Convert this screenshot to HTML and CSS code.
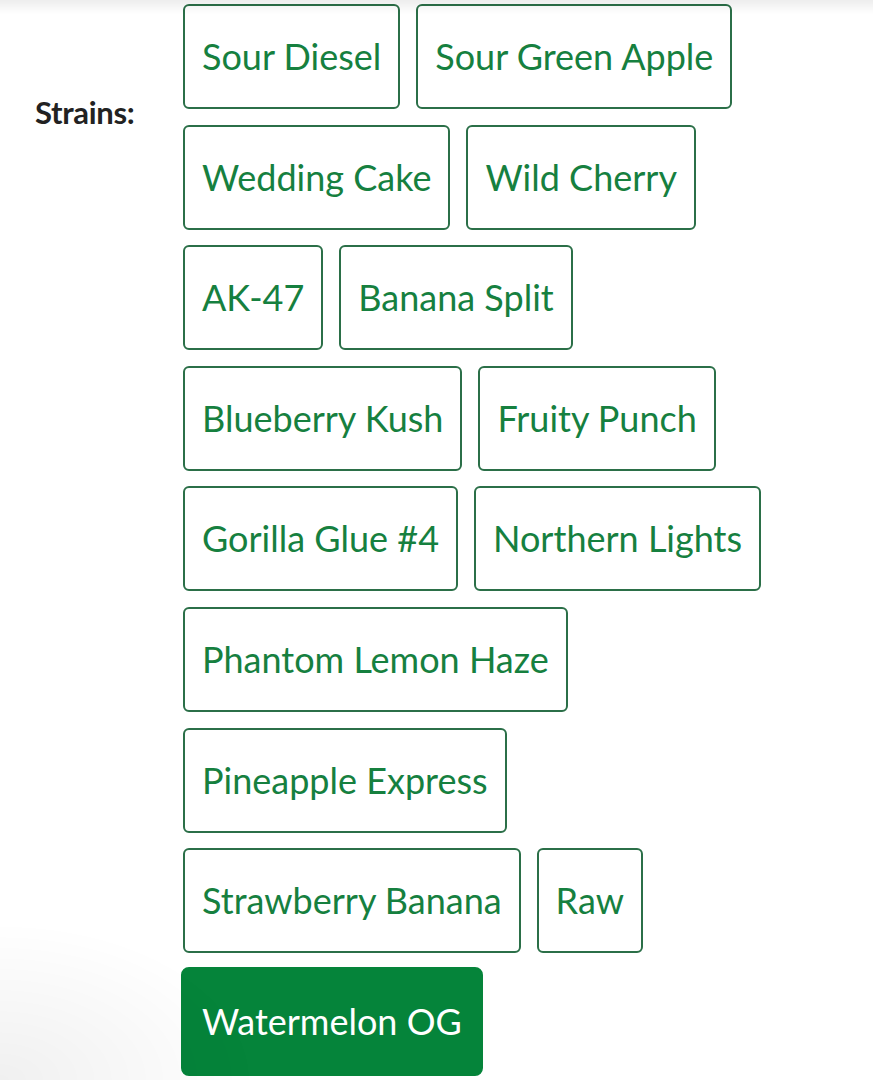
FILE: index.html
```html
<!DOCTYPE html>
<html>
<head>
<meta charset="utf-8">
<link rel="stylesheet" href="styles.css">
</head>
<body>
<div class="page">
  <div class="field">
    <div class="label">Strains:</div>
    <div class="options">
      <button class="opt">Sour Diesel</button>
      <button class="opt">Sour Green Apple</button>
      <button class="opt">Wedding Cake</button>
      <button class="opt">Wild Cherry</button>
      <button class="opt">AK-47</button>
      <button class="opt">Banana Split</button>
      <button class="opt">Blueberry Kush</button>
      <button class="opt">Fruity Punch</button>
      <button class="opt">Gorilla Glue #4</button>
      <button class="opt">Northern Lights</button>
      <button class="opt">Phantom Lemon Haze</button>
      <button class="opt">Pineapple Express</button>
      <button class="opt">Strawberry Banana</button>
      <button class="opt">Raw</button>
      <button class="opt selected">Watermelon OG</button>
    </div>
  </div>
</div>
<div class="topshade"></div>
<div class="cornershade"></div>
</body>
</html>
```

FILE: styles.css
```css
html, body {
  margin: 0;
  padding: 0;
  background: #ffffff;
  height: 1080px;
  overflow: hidden;
}
.page {
  padding-top: 4px;
  font-family: Lato, "Noto Sans", sans-serif;
}
.field {
  display: flex;
  align-items: flex-start;
}
.label {
  width: 183px;
  flex: none;
  box-sizing: border-box;
  padding-left: 35px;
  padding-top: 90px;
  font-size: 31px;
  font-weight: 700;
  color: #222222;
  line-height: 37px;
  letter-spacing: -0.3px;
}
.options {
  width: 640px;
  display: flex;
  flex-wrap: wrap;
  row-gap: 15.6px;
  column-gap: 16px;
  align-items: flex-start;
}
.opt {
  font-family: Lato, "Noto Sans", sans-serif;
  font-size: 36px;
  line-height: 41px;
  padding: 30px 17px;
  border: 2px solid #2b6f48;
  border-radius: 6px;
  background: #ffffff;
  color: #16803f;
  margin: 0;
  cursor: pointer;
}
.opt.selected {
  background: #05843a;
  border-color: #05843a;
  color: #ffffff;
  border-radius: 8px;
  padding: 32px 19px;
  margin-left: -2px;
  margin-top: -2px;
}
.topshade {
  position: fixed;
  left: 0;
  top: 0;
  width: 100%;
  height: 14px;
  background: linear-gradient(to bottom, rgba(0,0,0,0.07), rgba(0,0,0,0));
  pointer-events: none;
}
.cornershade {
  position: fixed;
  left: 0;
  bottom: 0;
  width: 260px;
  height: 160px;
  background: radial-gradient(ellipse at 0% 100%, rgba(0,0,0,0.06), rgba(0,0,0,0) 70%);
  pointer-events: none;
}
```
